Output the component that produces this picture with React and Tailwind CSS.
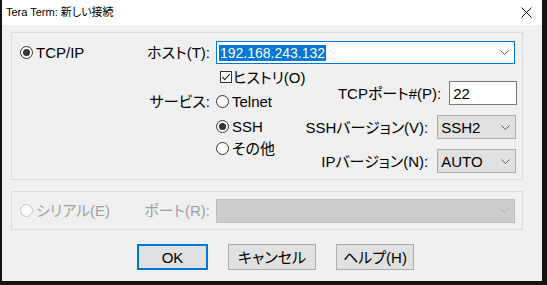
import React from "react";

const font = "[font-family:'Liberation_Sans','Noto_Sans_CJK_JP',sans-serif] [font-feature-settings:'palt']";

const Radio = ({ checked, disabled }) => (
  <span
    className={
      disabled
        ? "w-[13px] h-[13px] rounded-full border border-[#c6c6c6] bg-[#fbfbfb] flex items-center justify-center shrink-0"
        : "w-[13px] h-[13px] rounded-full border border-[#333333] bg-white flex items-center justify-center shrink-0"
    }
  >
    {checked && <span className="w-[7px] h-[7px] rounded-full bg-[#333333]" />}
  </span>
);

const Chevron = ({ color = "#5f5f5f" }) => (
  <svg width="9" height="5" viewBox="0 0 9 5" className="shrink-0">
    <path d="M0.5 0.5 L4.5 4.5 L8.5 0.5" fill="none" stroke={color} strokeWidth="1" />
  </svg>
);

const Checkbox = () => (
  <svg width="12" height="12" viewBox="0 0 12 12" className="shrink-0">
    <rect x="0.5" y="0.5" width="11" height="11" fill="#fff" stroke="#333" />
    <path d="M2.3 6 L4.8 8.6 L9.8 3.2" fill="none" stroke="#333" strokeWidth="1.2" />
  </svg>
);

const Select = ({ value }) => (
  <div className="w-[79px] h-[24px] bg-[#e1e1e1] border border-[#adadad] flex items-center justify-between pl-[3px] pr-[5px] shrink-0">
    <span>{value}</span>
    <Chevron />
  </div>
);

const Label = ({ children }) => (
  <div className="w-[69px] pr-[6px] flex justify-end shrink-0">
    <span className="whitespace-nowrap">{children}</span>
  </div>
);

const Button = ({ children, primary, width }) => (
  <div
    className={
      primary
        ? "h-[26px] bg-[#e1e1e1] border-2 border-[#0078d7] flex items-center justify-center whitespace-nowrap"
        : "h-[26px] bg-[#e1e1e1] border border-[#adadad] flex items-center justify-center whitespace-nowrap"
    }
    style={{ width }}
  >
    {children}
  </div>
);

export default function App() {
  return (
    <div className={`w-[547px] h-[285px] bg-[#141414] text-[15px] leading-none text-black ${font}`}>
      <div className="ml-[2px] w-[540px] h-[281px] bg-[#f0f0f0] flex flex-col">
        {/* title bar */}
        <div className="h-[25px] bg-white flex items-center justify-between pl-[4px] pr-[10px] text-[11px]">
          <span>Tera Term: 新しい接続</span>
          <svg width="11" height="11" viewBox="0 0 11 11">
            <path d="M0.5 0.5 L10.5 10.5 M10.5 0.5 L0.5 10.5" stroke="#111" strokeWidth="1" />
          </svg>
        </div>

        {/* TCP/IP group */}
        <div className="ml-[9px] mt-[7px] w-[512px] h-[148px] border border-[#dcdcdc] flex">
          <div className="w-[135px] pt-[8px] shrink-0">
            <div className="h-[23px] flex items-center gap-[3px] pl-[8px]">
              <Radio checked />
              <span>TCP/IP</span>
            </div>
          </div>
          <div className="w-[375px] pt-[8px] pr-[7px]">
            <div className="h-[23px] flex items-center">
              <Label>ホスト(T):</Label>
              <div className="w-[299px] h-[23px] border border-[#0078d7] bg-white flex items-center justify-between pl-[2px] pr-[5px]">
                <span className="bg-[#0078d7] text-white text-[14px] leading-[16px] px-[1px]">192.168.243.132</span>
                <Chevron />
              </div>
            </div>
            <div className="flex mt-[1px]">
              <div className="grid grid-cols-[69px_auto] grid-rows-[24px_25px_25px_18px] shrink-0">
                <span />
                <div className="flex items-center gap-[1px] pl-[4px] whitespace-nowrap">
                  <Checkbox />
                  <span>ヒストリ(O)</span>
                </div>
                <div className="self-center">
                  <Label>サービス:</Label>
                </div>
                <div className="flex items-center gap-[3px]">
                  <Radio />
                  <span>Telnet</span>
                </div>
                <span />
                <div className="flex items-center gap-[3px]">
                  <Radio checked />
                  <span>SSH</span>
                </div>
                <span />
                <div className="flex items-center gap-[3px] whitespace-nowrap">
                  <Radio />
                  <span>その他</span>
                </div>
              </div>
              <div className="flex-1 flex flex-col items-end pt-[16px] gap-[10px]">
                <div className="flex items-center gap-[8px] mr-[-1px] whitespace-nowrap">
                  <span>TCPポート#(P):</span>
                  <div className="w-[68px] h-[24px] bg-white border border-[#7a7a7a] flex items-center pl-[3px] shrink-0">22</div>
                </div>
                <div className="flex items-center gap-[9px] whitespace-nowrap">
                  <span>SSHバージョン(V):</span>
                  <Select value="SSH2" />
                </div>
                <div className="flex items-center gap-[9px] whitespace-nowrap">
                  <span>IPバージョン(N):</span>
                  <Select value="AUTO" />
                </div>
              </div>
            </div>
          </div>
        </div>

        {/* serial group */}
        <div className="ml-[9px] mt-[11px] w-[512px] h-[39px] border border-[#dcdcdc] flex items-center text-[#a0a0a0]">
          <div className="w-[135px] flex items-center gap-[3px] pl-[8px] whitespace-nowrap shrink-0">
            <Radio disabled />
            <span>シリアル(E)</span>
          </div>
          <Label>ポート(R):</Label>
          <div className="w-[299px] h-[24px] bg-[#cccccc] border border-[#bfbfbf] flex items-center justify-end pr-[5px] shrink-0">
            <Chevron color="#acacac" />
          </div>
        </div>

        {/* buttons */}
        <div className="mt-[14px] ml-[135px] flex gap-[20px]">
          <Button primary width={71}>OK</Button>
          <Button width={88}>キャンセル</Button>
          <Button width={78}>ヘルプ(H)</Button>
        </div>
      </div>
    </div>
  );
}
